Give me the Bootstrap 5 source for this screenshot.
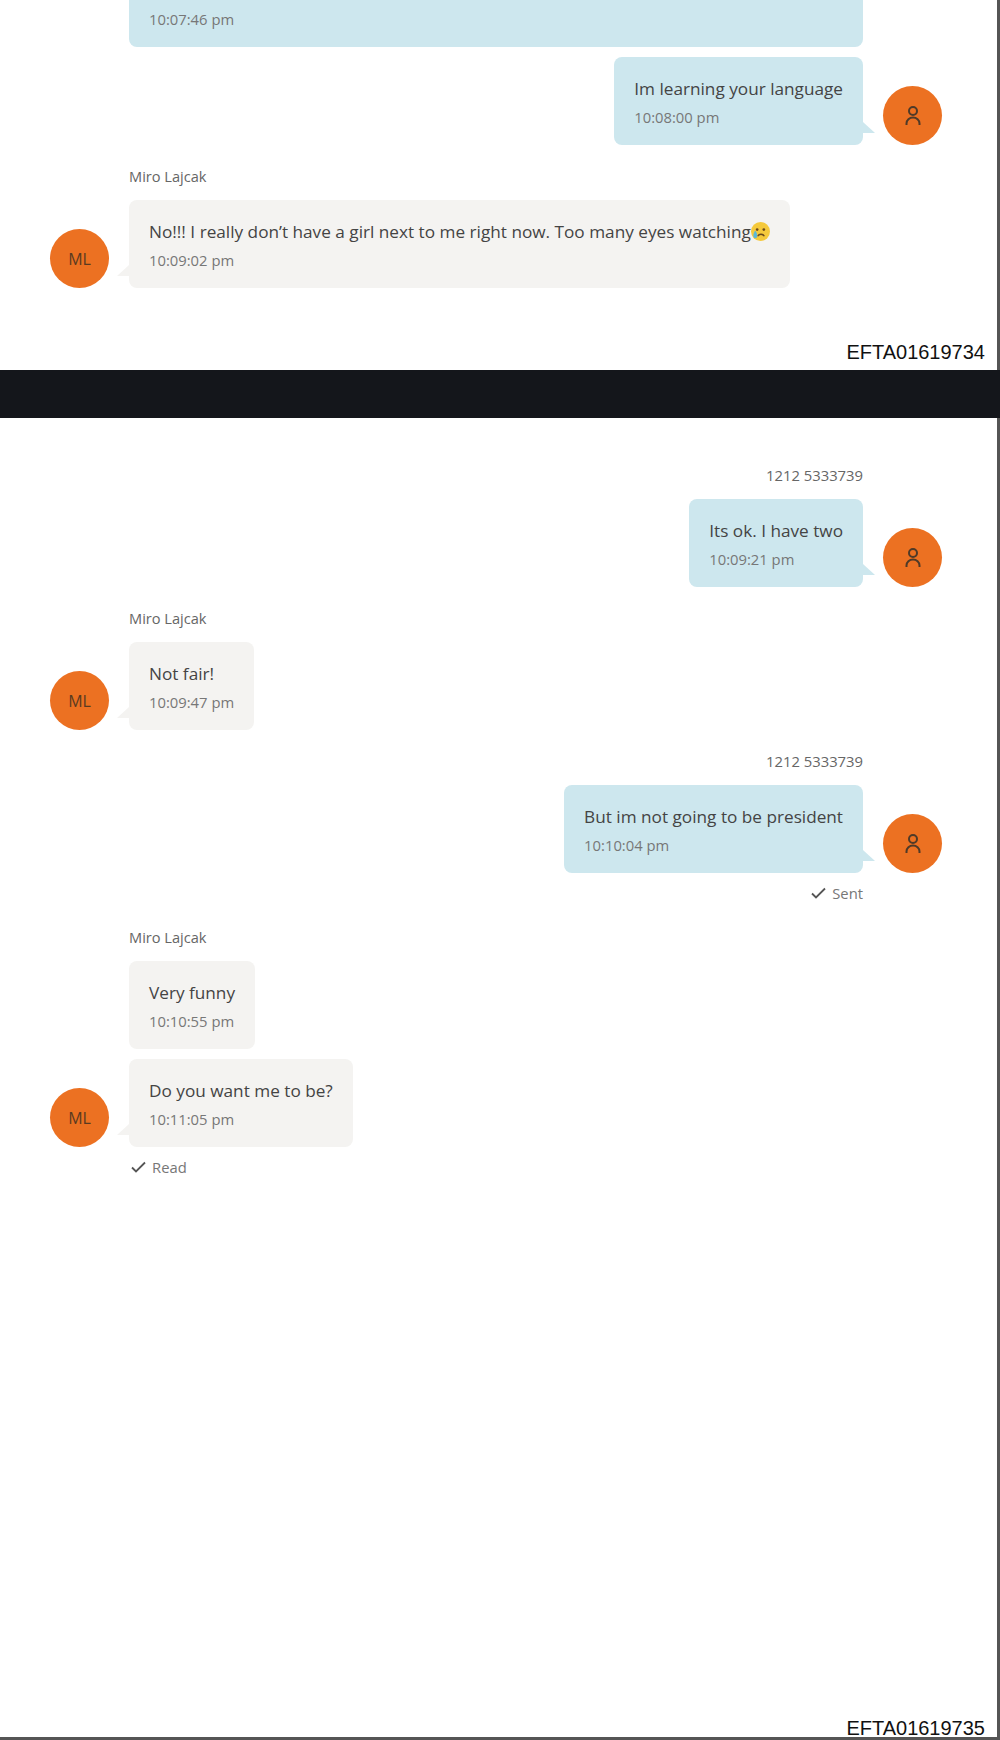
<!DOCTYPE html>
<html lang="en">
<head>
    <meta charset="UTF-8">
    <meta name="viewport" content="width=device-width, initial-scale=1.0">
    <title>Messages</title>
    <link href="https://cdn.jsdelivr.net/npm/bootstrap@5.3.3/dist/css/bootstrap.min.css" rel="stylesheet">
    <style>
        html, body { background: #fff; }
        body { height: 1740px; overflow: hidden; font-family: "Open Sans", sans-serif; color: #444; }
        .sheet { border-right: 3px solid #555; }
        .sheet-one { height: 370px; overflow: hidden; }
        .sheet-two { height: 1322px; border-bottom: 3px solid #555; padding-top: 47px; }
        .page-gap { height: 48px; background: #14161b; }
        .thread { padding: 0 55px 0 50px; }
        .sheet-one .thread { margin-top: -41px; }
        .msg-name { font-size: 14.6px; line-height: 20px; color: #666; margin-bottom: 14px; padding: 0 79px; }
        .msg-name.text-end { padding-right: 79px; font-size: 14.8px; }
        .name-gap { margin-top: 21px; }
        .msg-row { gap: 20px; margin-bottom: 10px; }
        .bubble { position: relative; padding: 20px 20px 0; height: 88px; border-radius: 8px; white-space: nowrap; }
        .bubble-in { background: #f4f3f1; }
        .bubble-out { background: #cde7ee; }
        .bubble-wide { width: 734px; }
        .bubble-tail { position: absolute; bottom: 12px; width: 0; height: 0; border-bottom: 11px solid; }
        .bubble-in .bubble-tail { left: -12px; border-left: 12px solid transparent; border-bottom-color: #f4f3f1; }
        .bubble-out .bubble-tail { right: -12px; border-right: 12px solid transparent; border-bottom-color: #cde7ee; }
        .msg-text { font-size: 17.2px; line-height: 24px; color: #444; margin-bottom: 6px; }
        .msg-time { font-size: 14.8px; line-height: 20px; color: #777; }
        .avatar-dot { width: 59px; height: 59px; flex: none; border-radius: 50%; background: #ec7122; color: #5a3a20; font-size: 16px; }
        .avatar-spacer { width: 59px; flex: none; }
        .msg-status { font-size: 14.8px; line-height: 20px; color: #777; gap: 6px; margin-top: 2px; }
        .status-out { padding-right: 79px; margin-bottom: 24px; }
        .status-in { padding-left: 81px; margin-top: 6px; }
        .doc-id { font-family: "Liberation Sans", sans-serif; font-size: 20px; line-height: 18px; color: #111; text-align: right; padding-right: 12px; }
        .sheet-one .doc-id { margin-top: 55px; }
        .emoji-face { vertical-align: -3px; }
    </style>
</head>
<body>
    <div class="sheet sheet-one">
        <div class="thread">
            <div class="d-flex justify-content-end msg-row">
                <div class="bubble bubble-out bubble-wide">
                    <div class="msg-text">&nbsp;</div>
                    <div class="msg-time">10:07:46 pm</div>
                </div>
                <div class="avatar-spacer"></div>
            </div>
            <div class="d-flex justify-content-end align-items-end msg-row">
                <div class="bubble bubble-out">
                    <div class="msg-text">Im learning your language</div>
                    <div class="msg-time">10:08:00 pm</div>
                    <span class="bubble-tail"></span>
                </div>
                <div class="avatar-dot d-flex align-items-center justify-content-center">
                    <svg width="16" height="20" viewBox="0 0 16 20" fill="none" stroke="#4f3a28" stroke-width="2"><circle cx="8" cy="5" r="4"/><path d="M1.500 19v-1.500a6.500 6 0 0 1 13 0v1.500"/></svg>
                </div>
            </div>
            <div class="msg-name name-gap">Miro Lajcak</div>
            <div class="d-flex align-items-end msg-row">
                <div class="avatar-dot d-flex align-items-center justify-content-center">ML</div>
                <div class="bubble bubble-in">
                    <div class="msg-text">No!!! I really don’t have a girl next to me right now. Too many eyes watching<svg class="emoji-face" width="19" height="19" viewBox="0 0 20 20"><circle cx="10" cy="10" r="10" fill="#f5c93c"/><circle cx="6.500" cy="8" r="1.400" fill="#6b4a1e"/><circle cx="13.500" cy="8" r="1.400" fill="#6b4a1e"/><path d="M7 15a4 4 0 0 1 7 0" fill="none" stroke="#6b4a1e" stroke-width="1.600"/><path d="M4.500 9c-2.500 3.500-3 8 0 8s2.500-4.500 0-8z" fill="#5cb8d8"/></svg></div>
                    <div class="msg-time">10:09:02 pm</div>
                    <span class="bubble-tail"></span>
                </div>
            </div>
        </div>
        <div class="doc-id">EFTA01619734</div>
    </div>
    <div class="page-gap"></div>
    <div class="sheet sheet-two d-flex flex-column">
        <div class="thread flex-grow-1">
            <div class="msg-name text-end">1212 5333739</div>
            <div class="d-flex justify-content-end align-items-end msg-row">
                <div class="bubble bubble-out">
                    <div class="msg-text">Its ok. I have two</div>
                    <div class="msg-time">10:09:21 pm</div>
                    <span class="bubble-tail"></span>
                </div>
                <div class="avatar-dot d-flex align-items-center justify-content-center">
                    <svg width="16" height="20" viewBox="0 0 16 20" fill="none" stroke="#4f3a28" stroke-width="2"><circle cx="8" cy="5" r="4"/><path d="M1.500 19v-1.500a6.500 6 0 0 1 13 0v1.500"/></svg>
                </div>
            </div>
            <div class="msg-name name-gap">Miro Lajcak</div>
            <div class="d-flex align-items-end msg-row">
                <div class="avatar-dot d-flex align-items-center justify-content-center">ML</div>
                <div class="bubble bubble-in">
                    <div class="msg-text">Not fair!</div>
                    <div class="msg-time">10:09:47 pm</div>
                    <span class="bubble-tail"></span>
                </div>
            </div>
            <div class="msg-name text-end name-gap">1212 5333739</div>
            <div class="d-flex justify-content-end align-items-end msg-row">
                <div class="bubble bubble-out">
                    <div class="msg-text">But im not going to be president</div>
                    <div class="msg-time">10:10:04 pm</div>
                    <span class="bubble-tail"></span>
                </div>
                <div class="avatar-dot d-flex align-items-center justify-content-center">
                    <svg width="16" height="20" viewBox="0 0 16 20" fill="none" stroke="#4f3a28" stroke-width="2"><circle cx="8" cy="5" r="4"/><path d="M1.500 19v-1.500a6.500 6 0 0 1 13 0v1.500"/></svg>
                </div>
            </div>
            <div class="msg-status status-out d-flex justify-content-end align-items-center">
                <svg width="15" height="12" viewBox="0 0 15 12" fill="none" stroke="#555" stroke-width="1.800"><path d="M1 6.500l4 4L14 1.500"/></svg>
                <span>Sent</span>
            </div>
            <div class="msg-name">Miro Lajcak</div>
            <div class="d-flex align-items-end msg-row">
                <div class="avatar-spacer"></div>
                <div class="bubble bubble-in">
                    <div class="msg-text">Very funny</div>
                    <div class="msg-time">10:10:55 pm</div>
                </div>
            </div>
            <div class="d-flex align-items-end msg-row">
                <div class="avatar-dot d-flex align-items-center justify-content-center">ML</div>
                <div class="bubble bubble-in">
                    <div class="msg-text">Do you want me to be?</div>
                    <div class="msg-time">10:11:05 pm</div>
                    <span class="bubble-tail"></span>
                </div>
            </div>
            <div class="msg-status status-in d-flex align-items-center">
                <svg width="15" height="12" viewBox="0 0 15 12" fill="none" stroke="#555" stroke-width="1.800"><path d="M1 6.500l4 4L14 1.500"/></svg>
                <span>Read</span>
            </div>
        </div>
        <div class="doc-id">EFTA01619735</div>
    </div>
    <script src="https://cdn.jsdelivr.net/npm/bootstrap@5.3.3/dist/js/bootstrap.bundle.min.js"></script>
</body>
</html>
